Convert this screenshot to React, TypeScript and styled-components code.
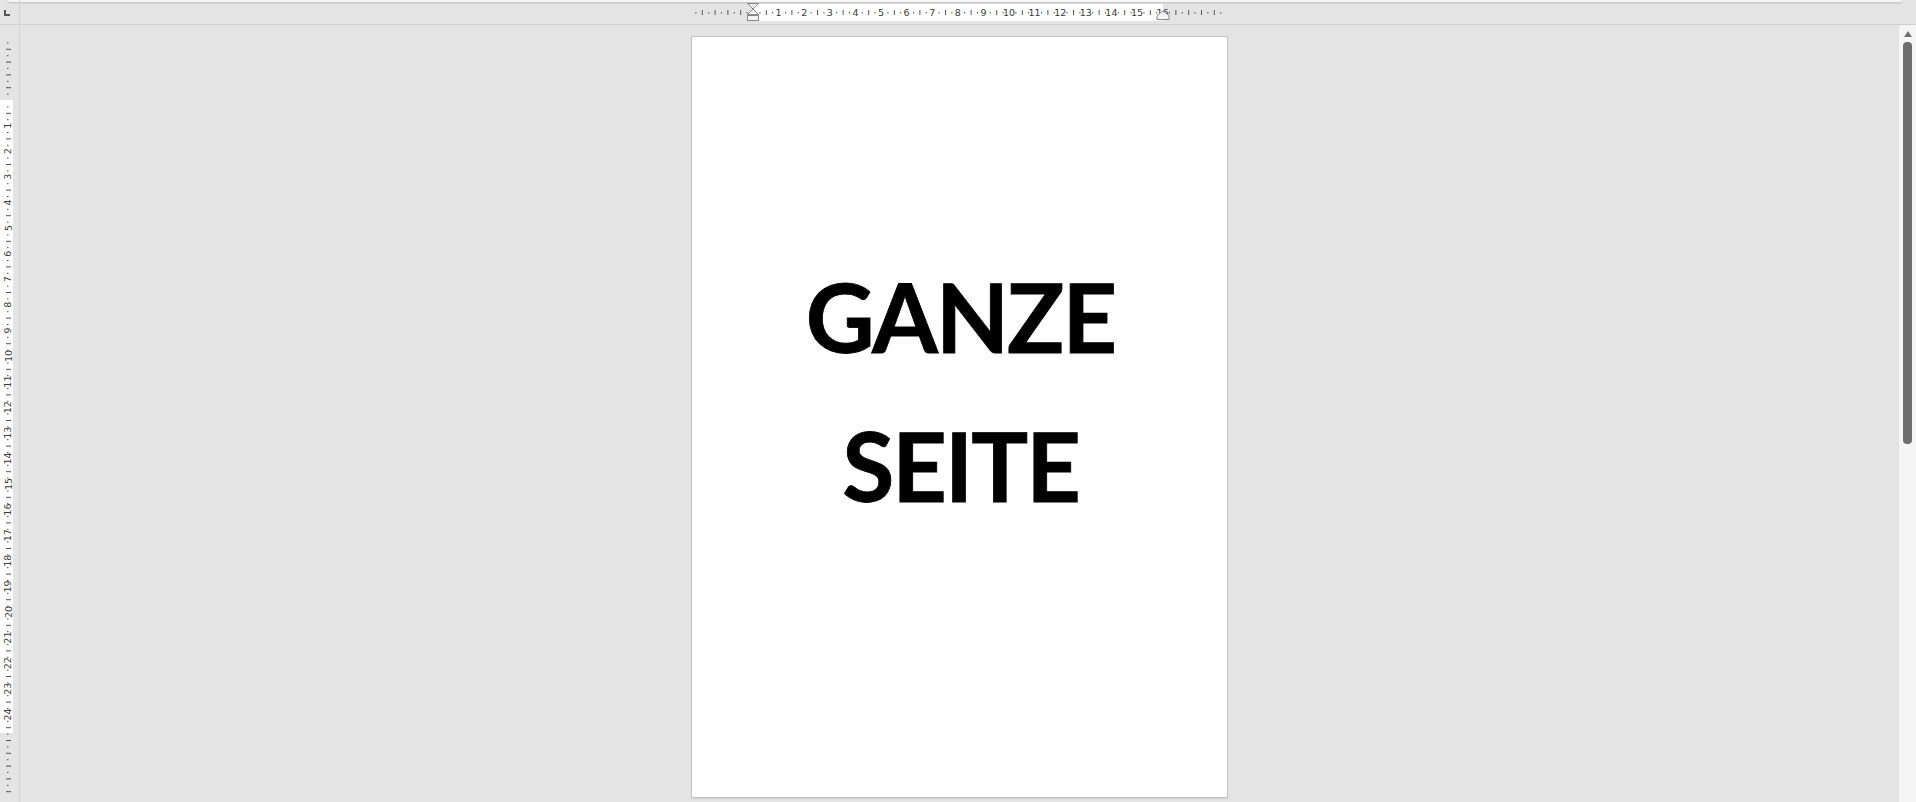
import React from "react";
import styled, { createGlobalStyle } from "styled-components";

const CM = 25.6;
const PAGE_W = 537;
const PAGE_H = 762;
const MARGIN_L = 62;
const MARGIN_R = 65;
const MARGIN_T = 64;
const MARGIN_B = 65;

const GlobalStyle = createGlobalStyle`
  html, body {
    margin: 0;
    padding: 0;
    background: #e4e4e4;
    overflow: hidden;
  }
  body {
    font-family: "Liberation Sans", Arial, sans-serif;
  }
`;

type Mark = { pos: number; kind: "label" | "tick" | "dot"; label?: number };

// quarter-centimetre marks, relative to the margin origin
const buildMarks = (length: number, before: number, textLen: number): Mark[] => {
  const marks: Mark[] = [];
  const start = -Math.floor(before / (CM / 4));
  const end = Math.floor((length - before) / (CM / 4));
  for (let k = start; k <= end; k++) {
    if (k === 0) continue;
    const pos = before + (k * CM) / 4;
    if (pos < 2 || pos > length - 2) continue;
    const inside = pos > before && pos < before + textLen;
    if (k % 4 === 0 && inside) {
      marks.push({ pos, kind: "label", label: k / 4 });
    } else if (k % 2 === 0) {
      marks.push({ pos, kind: "tick" });
    } else {
      marks.push({ pos, kind: "dot" });
    }
  }
  return marks;
};

const HorizontalRuler: React.FC = () => {
  const textW = PAGE_W - MARGIN_L - MARGIN_R;
  const marks = buildMarks(PAGE_W, MARGIN_L, textW);
  return (
    <svg width={PAGE_W} height={24} viewBox={`0 0 ${PAGE_W} 24`}>
      <rect x={MARGIN_L} y={4} width={textW} height={17} fill="#ffffff" />
      {marks.map((m, i) =>
        m.kind === "label" ? (
          <text
            key={i}
            x={m.pos}
            y={15.5}
            fontSize={9.5}
            fill="#3a3a3a"
            textAnchor="middle"
            fontFamily="'DejaVu Sans', sans-serif"
          >
            {m.label}
          </text>
        ) : (
          <line
            key={i}
            x1={m.pos + 0.5}
            x2={m.pos + 0.5}
            y1={m.kind === "tick" ? 10 : 12}
            y2={m.kind === "tick" ? 15 : 13.5}
            stroke="#555"
            strokeWidth={1}
          />
        )
      )}
      {/* first line / left indent */}
      <g fill="#f4f4f4" stroke="#8a8a8a" strokeWidth={1}>
        <path d={`M${MARGIN_L - 5.5} 3.5 H${MARGIN_L + 5.5} L${MARGIN_L} 9 Z`} />
        <path d={`M${MARGIN_L - 5.5} 14.5 H${MARGIN_L + 5.5} L${MARGIN_L} 9 Z`} />
        <rect x={MARGIN_L - 5.5} y={15.5} width={11} height={5} />
      </g>
      {/* right indent */}
      <path
        d={`M${PAGE_W - MARGIN_R - 6} 19.5 V15.5 L${PAGE_W - MARGIN_R} 11 L${
          PAGE_W - MARGIN_R + 6
        } 15.5 V19.5 Z`}
        fill="#f4f4f4"
        stroke="#8a8a8a"
        strokeWidth={1}
      />
    </svg>
  );
};

const VerticalRuler: React.FC = () => {
  const textH = PAGE_H - MARGIN_T - MARGIN_B;
  const marks = buildMarks(PAGE_H, MARGIN_T, textH);
  return (
    <svg width={19} height={PAGE_H} viewBox={`0 0 19 ${PAGE_H}`}>
      <rect x={0} y={MARGIN_T} width={13} height={textH} fill="#ffffff" />
      {marks.map((m, i) =>
        m.kind === "label" ? (
          <text
            key={i}
            x={8}
            y={m.pos}
            fontSize={9.5}
            fill="#3a3a3a"
            textAnchor="middle"
            dominantBaseline="central"
            fontFamily="'DejaVu Sans', sans-serif"
            transform={`rotate(-90 8 ${m.pos})`}
          >
            {m.label}
          </text>
        ) : (
          <line
            key={i}
            y1={m.pos + 0.5}
            y2={m.pos + 0.5}
            x1={m.kind === "tick" ? 6 : 7}
            x2={m.kind === "tick" ? 11 : 8.5}
            stroke="#555"
            strokeWidth={1}
          />
        )
      )}
    </svg>
  );
};

export default function App() {
  return (
    <>
      <GlobalStyle />
      <Window>
        <TopShade />
        <TopRow>
          <Corner>
            <TabStop />
          </Corner>
          <RulerStrip>
            <HorizontalRuler />
          </RulerStrip>
          <RightSpacer />
        </TopRow>
        <Body>
          <SideRuler>
            <VerticalRuler />
          </SideRuler>
          <Workspace>
            <Page>
              <Heading>GANZE</Heading>
              <Heading>SEITE</Heading>
            </Page>
          </Workspace>
          <ScrollBar>
            <ArrowUp />
            <Thumb />
          </ScrollBar>
        </Body>
      </Window>
    </>
  );
}

const Window = styled.div`
  position: relative;
  width: 1916px;
  height: 802px;
  display: flex;
  flex-direction: column;
  background: #e4e4e4;
  overflow: hidden;
`;

const TopShade = styled.div`
  position: absolute;
  top: 0;
  left: 8px;
  right: 14px;
  height: 2px;
  background: #f7f7f7;
  border-bottom-left-radius: 3px;
  border-bottom-right-radius: 3px;
  box-shadow: 0 1px 2px rgba(0, 0, 0, 0.18);
`;

const TopRow = styled.div`
  display: flex;
  height: 24px;
  border-bottom: 1px solid #d0d0d0;
  background: #e4e4e4;
`;

const Corner = styled.div`
  position: relative;
  width: 19px;
  border-right: 1px solid #d2d2d2;
  flex-shrink: 0;
`;

const TabStop = styled.div`
  position: absolute;
  left: 4px;
  top: 10px;
  width: 6px;
  height: 6px;
  border-left: 2px solid #555;
  border-bottom: 2px solid #555;
  box-sizing: border-box;
`;

const RulerStrip = styled.div`
  flex: 1;
  display: flex;
  justify-content: center;
`;

const RightSpacer = styled.div`
  width: 17px;
  flex-shrink: 0;
`;

const Body = styled.div`
  flex: 1;
  display: flex;
  min-height: 0;
`;

const SideRuler = styled.div`
  width: 19px;
  flex-shrink: 0;
  border-right: 1px solid #d2d2d2;
  padding-top: 11px;
  display: flex;
  flex-direction: column;
`;

const Workspace = styled.div`
  flex: 1;
  display: flex;
  justify-content: center;
  align-items: flex-start;
  padding-top: 11px;
`;

const Page = styled.div`
  width: ${PAGE_W}px;
  height: ${PAGE_H}px;
  box-sizing: border-box;
  flex-shrink: 0;
  background: #ffffff;
  border: 1px solid #c4c4c4;
  box-shadow: 0 1px 1px rgba(0, 0, 0, 0.08);
  padding-top: 205px;
  display: flex;
  flex-direction: column;
  align-items: center;
`;

const Heading = styled.div`
  font-family: Lato, "Open Sans", sans-serif;
  font-weight: 700;
  font-size: 95px;
  letter-spacing: -2px;
  line-height: 149px;
  color: #000;
  white-space: nowrap;
  margin-right: -2px;
  -webkit-text-stroke: 0.8px #000;
`;

const ScrollBar = styled.div`
  width: 17px;
  flex-shrink: 0;
  background: #f5f5f5;
  border-top-left-radius: 4px;
  display: flex;
  flex-direction: column;
  align-items: center;
  padding-top: 6px;
  box-sizing: border-box;
`;

const ArrowUp = styled.div`
  width: 0;
  height: 0;
  border-left: 4px solid transparent;
  border-right: 4px solid transparent;
  border-bottom: 6px solid #707070;
`;

const Thumb = styled.div`
  margin-top: 5px;
  width: 9px;
  height: 402px;
  border-radius: 4px;
  background: #6e6e6e;
`;
